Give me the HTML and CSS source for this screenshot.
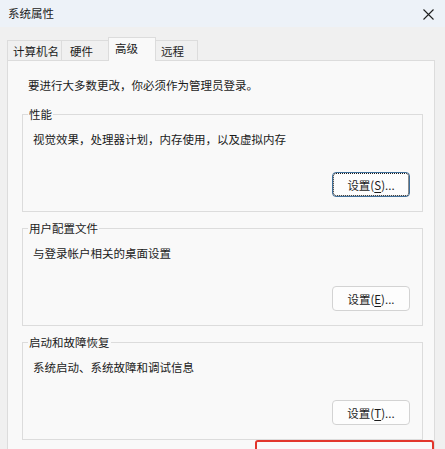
FILE: index.html
```html
<!DOCTYPE html>
<html lang="zh-CN">

<head>
    <meta charset="UTF-8">
    <meta name="viewport" content="width=device-width, initial-scale=1.0">
    <title>系统属性</title>
    <link rel="stylesheet" href="styles.css">
</head>

<body>
    <div class="window">
        <div class="title-bar">
            <span class="title">系统属性</span>
            <button class="close-btn" aria-label="关闭">
                <svg width="11" height="11" viewBox="0 0 11 11">
                    <path d="M0.5 0.5 L10.5 10.5 M10.5 0.5 L0.5 10.5" stroke="#1f1f1f" stroke-width="1.1" fill="none" />
                </svg>
            </button>
        </div>

        <div class="tabs">
            <div class="tab tab-name">计算机名</div>
            <div class="tab tab-hw">硬件</div>
            <div class="tab tab-adv active">高级</div>
            <div class="tab tab-remote">远程</div>
        </div>

        <div class="panel">
            <p class="notice">要进行大多数更改，你必须作为管理员登录。</p>

            <fieldset class="group">
                <legend>性能</legend>
                <p class="desc">视觉效果，处理器计划，内存使用，以及虚拟内存</p>
                <div class="actions">
                    <button class="btn focused">设置(<u>S</u>)...</button>
                </div>
            </fieldset>

            <fieldset class="group">
                <legend>用户配置文件</legend>
                <p class="desc">与登录帐户相关的桌面设置</p>
                <div class="actions">
                    <button class="btn">设置(<u>E</u>)...</button>
                </div>
            </fieldset>

            <fieldset class="group">
                <legend>启动和故障恢复</legend>
                <p class="desc">系统启动、系统故障和调试信息</p>
                <div class="actions">
                    <button class="btn">设置(<u>T</u>)...</button>
                </div>
            </fieldset>
        </div>

        <!-- annotation frame -->
        <div class="highlight"></div>
    </div>
</body>

</html>
```

FILE: styles.css
```css
:root {
    --title-bg: #edf2f8;
    --window-bg: #f0f0f0;
    --panel-bg: #f9f9f9;
    --line: #dcdcdc;
    --text: #1b1b1b;
    --accent-red: #e2352b;
}

* {
    margin: 0;
    padding: 0;
    box-sizing: border-box;
    font-family: "Microsoft YaHei UI", "Noto Sans CJK SC", sans-serif;
}

html,
body {
    width: 445px;
    height: 449px;
    overflow: hidden;
}

body {
    background-color: var(--window-bg);
    color: var(--text);
    font-size: 11.5px;
    line-height: 16px;
}

.window {
    position: relative;
    height: 100%;
    display: flex;
    flex-direction: column;
}

.title-bar {
    height: 27px;
    flex-shrink: 0;
    background-color: var(--title-bg);
    display: flex;
    align-items: center;
    justify-content: space-between;
    padding: 0 8px;
}

.title {
    margin-top: -1px;
}

.close-btn {
    background: none;
    border: none;
    width: 20px;
    height: 20px;
    display: flex;
    align-items: center;
    justify-content: center;
    margin-right: -1px;
    margin-top: 1px;
}

/* tab strip */
.tabs {
    display: flex;
    align-items: flex-end;
    flex-shrink: 0;
    height: 33px;
    padding-left: 7px;
}

.tab {
    height: 20px;
    border: 1px solid var(--line);
    border-bottom: none;
    background-color: #f0f0f0;
    padding: 2px 0 0 5px;
    margin-right: -1px;
}

.tab-name {
    width: 55px;
}

.tab-hw {
    width: 48px;
    padding-left: 8px;
}

.tab-adv {
    width: 48px;
}

.tab-remote {
    width: 43px;
}

.tab.active {
    position: relative;
    z-index: 1;
    height: 24px;
    margin-bottom: -1px;
    background-color: var(--panel-bg);
    padding: 2px 0 0 6px;
}

/* main panel */
.panel {
    flex: 1;
    margin: 0 10px 0 7px;
    background-color: var(--panel-bg);
    border: 1px solid var(--line);
    border-bottom: none;
    padding: 16px 11px 0 14px;
    overflow: hidden;
}

.notice {
    padding-left: 6px;
    margin-bottom: 13px;
}

.group {
    border: 1px solid var(--line);
    padding: 0 12px 14px 10px;
    margin-bottom: 8px;
}

.group legend {
    margin-left: -5px;
    padding: 0 1px;
}

.desc {
    margin-top: 9px;
}

.actions {
    display: flex;
    justify-content: flex-end;
    margin-top: 25px;
}

.btn {
    width: 78px;
    height: 25px;
    background-color: #fdfdfd;
    border: 1px solid #d3d3d3;
    border-radius: 4px;
    color: var(--text);
    font-size: 11.5px;
    line-height: 16px;
}

.btn u {
    text-underline-offset: 2px;
}

.btn.focused {
    border: 1px solid #3f6f9a;
    outline: 1px dotted #1c1c1c;
    outline-offset: -2px;
}

.highlight {
    position: absolute;
    left: 255px;
    top: 440px;
    bottom: 0;
    width: 179px;
    border: 2px solid var(--accent-red);
    border-bottom: none;
    border-radius: 3px 3px 0 0;
}
```
